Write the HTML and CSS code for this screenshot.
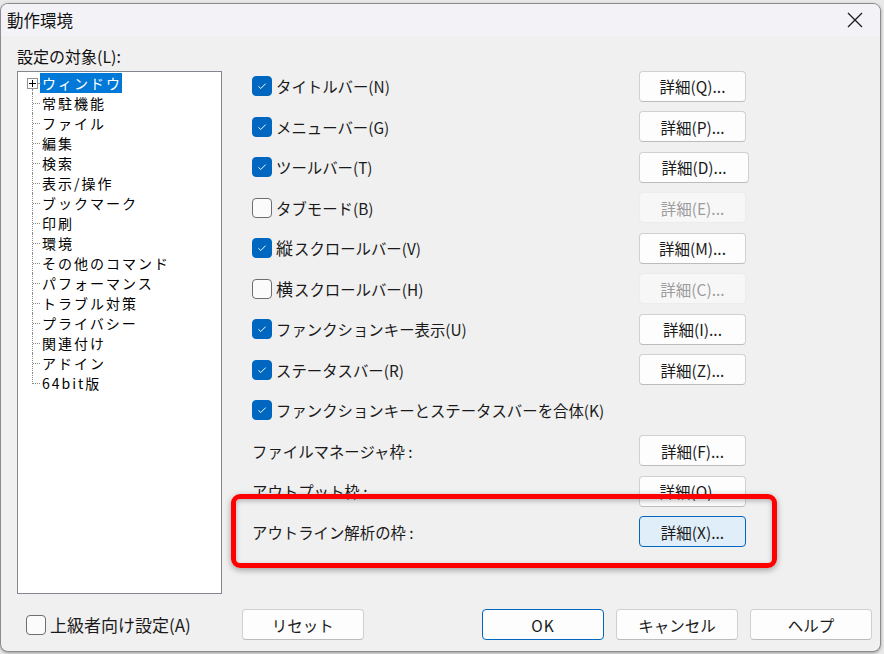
FILE: index.html
```html
<!DOCTYPE html>
<html lang="ja">
<head>
<meta charset="utf-8">
<title>動作環境</title>
<link rel="stylesheet" href="styles.css">
</head>
<body>
<div class="window">
  <div class="titlebar">
    <span class="title">動作環境</span>
    <svg class="close" width="16" height="16" viewBox="0 0 16 16"><path d="M1 1L15 15M15 1L1 15" stroke="#1b1b1b" stroke-width="1.3" fill="none"/></svg>
  </div>
  <div class="content">
    <div class="main">
      <div class="leftcol">
        <div class="lbl">設定の対象(L):</div>
        <div class="tree">
          <ul>
            <li class="root"><span class="plus"></span><span class="sel">ウィンドウ</span></li>
            <li>常駐機能</li>
            <li>ファイル</li>
            <li>編集</li>
            <li>検索</li>
            <li>表示/操作</li>
            <li>ブックマーク</li>
            <li>印刷</li>
            <li>環境</li>
            <li>その他のコマンド</li>
            <li>パフォーマンス</li>
            <li>トラブル対策</li>
            <li>プライバシー</li>
            <li>関連付け</li>
            <li>アドイン</li>
            <li class="last">64bit版</li>
          </ul>
        </div>
      </div>
      <div class="rightcol">
        <div class="row"><label class="cb"><span class="box on"><svg viewBox="0 0 20 20"><path d="M6 10.3L8.6 12.8L14 7.4" stroke="#fff" stroke-width="1.1" fill="none"/></svg></span>タイトルバー(N)</label><button class="btn">詳細(Q)...</button></div>
        <div class="row"><label class="cb"><span class="box on"><svg viewBox="0 0 20 20"><path d="M6 10.3L8.6 12.8L14 7.4" stroke="#fff" stroke-width="1.1" fill="none"/></svg></span>メニューバー(G)</label><button class="btn">詳細(P)...</button></div>
        <div class="row"><label class="cb"><span class="box on"><svg viewBox="0 0 20 20"><path d="M6 10.3L8.6 12.8L14 7.4" stroke="#fff" stroke-width="1.1" fill="none"/></svg></span>ツールバー(T)</label><button class="btn wide">詳細(D)...</button></div>
        <div class="row"><label class="cb"><span class="box"></span>タブモード(B)</label><button class="btn dis">詳細(E)...</button></div>
        <div class="row"><label class="cb"><span class="box on"><svg viewBox="0 0 20 20"><path d="M6 10.3L8.6 12.8L14 7.4" stroke="#fff" stroke-width="1.1" fill="none"/></svg></span><span class="kj">縦</span>スクロールバー(V)</label><button class="btn">詳細(M)...</button></div>
        <div class="row"><label class="cb"><span class="box"></span><span class="kj">横</span>スクロールバー(H)</label><button class="btn dis">詳細(C)...</button></div>
        <div class="row"><label class="cb"><span class="box on"><svg viewBox="0 0 20 20"><path d="M6 10.3L8.6 12.8L14 7.4" stroke="#fff" stroke-width="1.1" fill="none"/></svg></span>ファンクションキー表示(U)</label><button class="btn">詳細(I)...</button></div>
        <div class="row"><label class="cb"><span class="box on"><svg viewBox="0 0 20 20"><path d="M6 10.3L8.6 12.8L14 7.4" stroke="#fff" stroke-width="1.1" fill="none"/></svg></span>ステータスバー(R)</label><button class="btn">詳細(Z)...</button></div>
        <div class="row"><label class="cb"><span class="box on"><svg viewBox="0 0 20 20"><path d="M6 10.3L8.6 12.8L14 7.4" stroke="#fff" stroke-width="1.1" fill="none"/></svg></span>ファンクションキーとステータスバーを合体(K)</label></div>
        <div class="row"><span class="txt">ファイルマネージャ枠 :</span><button class="btn">詳細(F)...</button></div>
        <div class="row"><span class="txt">アウトプット枠 :</span><button class="btn">詳細(O)...</button></div>
        <div class="row"><span class="txt">アウトライン解析の枠 :</span><button class="btn focus">詳細(X)...</button></div>
      </div>
    </div>
    <div class="bottom">
      <label class="cb adv"><span class="box"></span>上級者向け設定(A)</label>
      <button class="btn big reset">リセット</button>
      <div class="spacer"></div>
      <button class="btn big ok">OK</button>
      <button class="btn big">キャンセル</button>
      <button class="btn big">ヘルプ</button>
    </div>
  </div>
  <div class="highlight"></div>
</div>
</body>
</html>
```

FILE: styles.css
```css
* { box-sizing: border-box; }
html, body { margin: 0; padding: 0; }
body {
  width: 884px;
  height: 654px;
  background: #e9e9e9;
  font-family: "Noto Sans CJK JP", "Noto Sans", sans-serif;
  color: #1a1a1a;
  overflow: hidden;
}
.window {
  position: relative;
  margin-top: 3px;
  width: 881px;
  height: 649px;
  border: 1px solid #8c8c8c;
  border-radius: 8px;
  overflow: hidden;
  background: #f0f0f0;
  box-shadow: 0 1px 3px rgba(0,0,0,0.35);
}
.titlebar {
  height: 32px;
  background: #f3f3f7;
  display: flex;
  align-items: center;
  justify-content: space-between;
  padding: 0 17px 0 6px;
}
.title {
  font-size: 16.5px;
  line-height: 20px;
  color: #111;
}
.close { width: 16px; height: 16px; }
.content {
  padding: 0 8px 0 16px;
}
.main {
  display: flex;
  height: 559px;
}
.leftcol {
  width: 205px;
  display: flex;
  flex-direction: column;
}
.lbl {
  font-size: 16px;
  line-height: 20px;
  padding-top: 10px;
  height: 35px;
  color: #111;
  white-space: nowrap;
}
.tree {
  height: 523px;
  background: #fff;
  border: 1px solid #828790;
  padding-top: 1px;
}
.tree ul {
  list-style: none;
  margin: 0;
  padding: 0;
}
.tree li {
  position: relative;
  height: 20px;
  line-height: 20px;
  font-size: 14px;
  letter-spacing: 2px;
  padding-left: 24px;
  color: #000;
  white-space: nowrap;
}
.tree li::before {
  content: "";
  position: absolute;
  left: 15px;
  top: 10px;
  width: 7px;
  border-top: 1px dotted #8a8a8a;
}
.tree li::after {
  content: "";
  position: absolute;
  left: 14px;
  top: 0;
  height: 20px;
  border-left: 1px dotted #8a8a8a;
}
.tree li.last::after { height: 11px; }
.tree li.root::before { left: 20px; width: 2px; }
.tree li.root::after { top: 16px; height: 4px; }
.plus {
  position: absolute;
  left: 9px;
  top: 5px;
  width: 11px;
  height: 11px;
  border: 1px solid #919191;
  background: #fff;
  z-index: 1;
}
.plus::before, .plus::after {
  content: "";
  position: absolute;
  background: #000;
}
.plus::before { left: 1px; top: 4px; width: 7px; height: 1px; }
.plus::after { left: 4px; top: 1px; width: 1px; height: 7px; }
.sel {
  display: inline-block;
  background: #0078d7;
  color: #fff;
  padding: 0 0 0 2px;
  height: 20px;
  margin-left: -2px;
}
.rightcol {
  flex: 1;
  padding-top: 30px;
  padding-left: 30px;
  padding-right: 126px;
}
.row {
  height: 40.5px;
  display: flex;
  align-items: center;
  justify-content: space-between;
}
.cb {
  display: flex;
  align-items: center;
  font-size: 15.4px;
  line-height: 20px;
  color: #1a1a1a;
  white-space: nowrap;
}
.kj { font-size: 17px; margin-right: 1px; }
.box {
  width: 20px;
  height: 20px;
  border-radius: 4px;
  border: 1px solid #6e6e6e;
  background: #fbfbfb;
  margin-right: 4px;
  flex: none;
  display: flex;
}
.box.on {
  background: #0067c0;
  border-color: #0067c0;
}
.box svg { width: 18px; height: 18px; }
.txt {
  font-size: 15.4px;
  line-height: 20px;
  color: #1a1a1a;
  white-space: nowrap;
}
.btn {
  font-family: "Noto Sans CJK JP", "Noto Sans", sans-serif;
  width: 107px;
  height: 31px;
  background: #fdfdfd;
  border: 1px solid #d0d0d0;
  border-bottom-color: #bcbcbc;
  border-radius: 4px;
  font-size: 15.5px;
  color: #1a1a1a;
  padding: 0;
  margin-right: 0;
}
.btn.wide { width: 110px; margin-right: -3px; }
.btn.dis {
  background: #f7f7f7;
  border-color: #ececec;
  color: #9c9c9c;
}
.btn.focus {
  background: #e0eef9;
  border-color: #0067c0;
}
.bottom {
  display: flex;
  align-items: center;
  margin-top: 14px;
  height: 31px;
}
.cb.adv {
  margin-left: 9px;
  font-size: 17px;
}
.btn.big { width: 122px; margin-left: 12px; flex: none; }
.btn.reset { margin-left: 51px; }
.spacer { flex: 1; }
.btn.ok {
  border-color: #0067c0;
  letter-spacing: 1px;
}
.highlight {
  position: absolute;
  left: 230px;
  top: 490px;
  width: 546px;
  height: 74px;
  border: 5px solid #ff0000;
  border-radius: 9px;
  box-shadow: 0 2px 6px rgba(0,0,0,0.35), inset 0 2px 5px rgba(0,0,0,0.25);
}
```
